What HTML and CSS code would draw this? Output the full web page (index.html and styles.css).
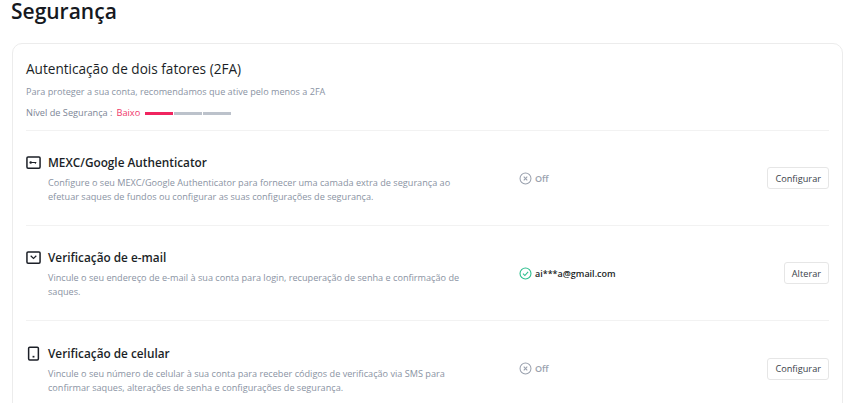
FILE: index.html
```html
<!DOCTYPE html>
<html lang="pt">
<head>
<meta charset="utf-8">
<title>Segurança</title>
<link rel="stylesheet" href="styles.css">
</head>
<body>
<h1 class="page-title">Segurança</h1>
<section class="card">
  <header class="intro">
    <h2 class="intro-title">Autenticação de dois fatores (2FA)</h2>
    <p class="intro-text">Para proteger a sua conta, recomendamos que ative pelo menos a 2FA</p>
    <div class="level">
      <span class="level-label">Nível de Segurança :</span>
      <span class="level-value">Baixo</span>
      <span class="meter"><i class="on"></i><i></i><i></i></span>
    </div>
  </header>
  <div class="row">
    <div class="info">
      <h3 class="row-title">
        <svg class="icon" viewBox="0 0 16 16" fill="none" stroke="#1b1f27" stroke-width="1.6"><rect x="1" y="2" width="14" height="12" rx="1.2"/><circle cx="5" cy="8" r="1.3" fill="#1b1f27" stroke="none"/><path d="M5.5 8h5.5M10 8v1.4" stroke-width="1.1"/></svg>
        MEXC/Google Authenticator
      </h3>
      <p class="row-text">Configure o seu MEXC/Google Authenticator para fornecer uma camada extra de segurança ao efetuar saques de fundos ou configurar as suas configurações de segurança.</p>
    </div>
    <div class="status off">
      <svg class="status-icon" viewBox="0 0 14 14" fill="none" stroke="#9aa1ae" stroke-width="1.1"><circle cx="7" cy="7" r="5.9"/><path d="M5.1 5.1l3.8 3.8M8.9 5.1l-3.8 3.8"/></svg>
      Off
    </div>
    <button class="btn">Configurar</button>
  </div>
  <div class="row">
    <div class="info">
      <h3 class="row-title">
        <svg class="icon" viewBox="0 0 16 16" fill="none" stroke="#1b1f27" stroke-width="1.6"><rect x="1" y="2" width="14" height="12" rx="1.2"/><path d="M5 6.2l3 2.8 3-2.8" stroke-width="1.3"/></svg>
        Verificação de e-mail
      </h3>
      <p class="row-text">Vincule o seu endereço de e-mail à sua conta para login, recuperação de senha e confirmação de saques.</p>
    </div>
    <div class="status on">
      <svg class="status-icon" viewBox="0 0 14 14" fill="none" stroke="#2fbf8f" stroke-width="1.2"><circle cx="7" cy="7" r="5.9"/><path d="M4.3 7.2l2 2 3.5-3.9"/></svg>
      ai***a@gmail.com
    </div>
    <button class="btn">Alterar</button>
  </div>
  <div class="row">
    <div class="info">
      <h3 class="row-title">
        <svg class="icon" viewBox="0 0 16 16" fill="none" stroke="#1b1f27" stroke-width="1.6"><rect x="2.8" y="1.2" width="10.4" height="13.6" rx="1.2"/><path d="M7 11.4h2" stroke-width="1.8"/></svg>
        Verificação de celular
      </h3>
      <p class="row-text">Vincule o seu número de celular à sua conta para receber códigos de verificação via SMS para confirmar saques, alterações de senha e configurações de segurança.</p>
    </div>
    <div class="status off">
      <svg class="status-icon" viewBox="0 0 14 14" fill="none" stroke="#9aa1ae" stroke-width="1.1"><circle cx="7" cy="7" r="5.9"/><path d="M5.1 5.1l3.8 3.8M8.9 5.1l-3.8 3.8"/></svg>
      Off
    </div>
    <button class="btn">Configurar</button>
  </div>
</section>
</body>
</html>
```
FILE: styles.css
```css
* { box-sizing: border-box; }
html, body { height: 403px; overflow: hidden; }
body {
  margin: 0;
  padding: 0 7px 0 12px;
  background: #fff;
  font-family: "Open Sans", "Noto Sans", sans-serif;
  color: #1b1f27;
}
.page-title {
  margin: 0 0 17px -1px;
  height: 26px;
  font-size: 21px;
  line-height: 22px;
  font-weight: 600;
  color: #16191f;
}
.card {
  border: 1px solid #ececec;
  border-radius: 10px;
  padding: 0 13px;
}
.intro {
  height: 87px;
  padding-top: 15px;
  border-bottom: 1px solid #f2f2f2;
}
.intro-title {
  margin: 0 0 7px;
  font-size: 13.6px;
  line-height: 19px;
  font-weight: 500;
}
.intro-text {
  margin: 0 0 7px;
  font-size: 9.1px;
  line-height: 14px;
  color: #8a93a3;
}
.level {
  display: flex;
  align-items: center;
  font-size: 9.2px;
  line-height: 14px;
  color: #7d8696;
}
.level-label { margin-right: 4px; }
.level-value { color: #f0386b; margin-right: 5px; }
.meter { display: flex; gap: 1px; }
.meter i { display: block; width: 28px; height: 3px; background: #bcc2cb; }
.meter i.on { background: #f0245f; }
.row {
  height: 95px;
  display: flex;
  align-items: center;
  border-bottom: 1px solid #f2f2f2;
}
.row:last-child { border-bottom: 0; }
.info { width: 493px; padding-top: 2px; }
.row-title {
  margin: 0 0 5px;
  display: flex;
  align-items: center;
  gap: 7px;
  font-size: 11.8px;
  line-height: 17px;
  font-weight: 600;
}
.icon { width: 15px; height: 15px; flex: none; }
.row-text {
  margin: 0 0 0 22px;
  width: 425px;
  font-size: 9.15px;
  line-height: 14px;
  color: #8a93a3;
}
.status {
  display: flex;
  align-items: center;
  gap: 3px;
  font-size: 9px;
  font-weight: 600;
}
.status.off { color: #9aa1ae; }
.status.on { color: #1b1f27; }
.status-icon { width: 13px; height: 13px; flex: none; }
.btn {
  margin-left: auto;
  height: 22px;
  padding: 0 7px;
  background: #fff;
  border: 1px solid #e6e6e6;
  border-radius: 3px;
  font-family: inherit;
  font-size: 9.2px;
  color: #3a3f49;
}
```
